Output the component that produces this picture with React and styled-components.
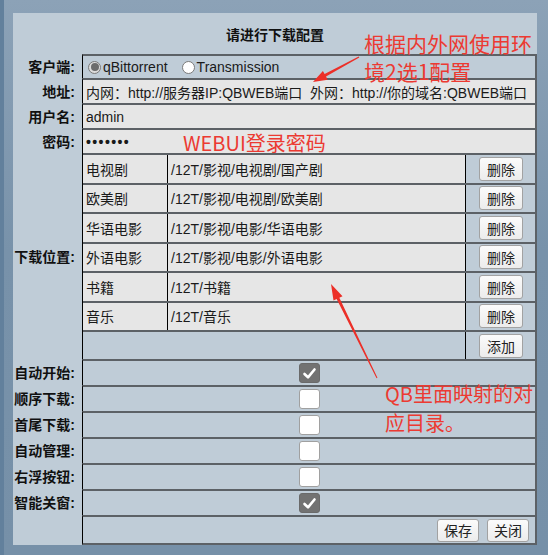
import React from "react";
import styled, { createGlobalStyle } from "styled-components";

const GlobalStyle = createGlobalStyle`
  html, body {
    margin: 0;
    padding: 0;
  }
  body {
    font-family: "Liberation Sans", "Noto Sans CJK SC", sans-serif;
    background: #7690a8;
  }
`;

const LINE = "#5c6166";
const PANEL = "#bfccd7";
const FIELD = "#e6e6e6";

const Frame = styled.div`
  position: relative;
  width: 548px;
  height: 555px;
  box-sizing: border-box;
  padding: 13px 11px 10px 13px;
  background: linear-gradient(180deg, #8ca2b7 0%, #7892aa 45%, #7690a8 100%);
  box-shadow: inset 4px 0 0 #62809c;
`;

const Panel = styled.div`
  width: 524px;
  height: 532px;
  background: ${PANEL};
  display: flex;
  flex-direction: column;
`;

const Title = styled.div`
  height: 41px;
  display: flex;
  align-items: center;
  justify-content: center;
  font-size: 14px;
  font-weight: bold;
  color: #111;
`;

const Form = styled.div`
  display: grid;
  grid-template-columns: 69px 1fr;
`;

const Label = styled.div`
  display: flex;
  align-items: center;
  justify-content: flex-end;
  padding-right: 7px;
  font-size: 14px;
  font-weight: bold;
  color: #111;
  white-space: nowrap;
`;

const Cell = styled.div`
  box-sizing: border-box;
  height: ${(p) => p.$h}px;
  display: flex;
  align-items: center;
  justify-content: ${(p) => p.$justify || "flex-start"};
  padding: ${(p) => p.$pad || "0 0 0 3px"};
  background: ${(p) => (p.$fill ? FIELD : PANEL)};
  border-left: 1px solid #000;
  border-right: 2px solid ${LINE};
  border-top: ${(p) => (p.$noTop ? "none" : `2px solid ${LINE}`)};
  border-bottom: ${(p) => (p.$last ? `2px solid ${LINE}` : "none")};
  font-size: 14px;
  color: #1a1a1a;
  white-space: nowrap;
  overflow: hidden;
  gap: ${(p) => p.$gap || 0}px;
`;

const Password = styled.span`
  font-weight: bold;
  letter-spacing: 1.4px;
`;

const RadioOption = styled.label`
  display: flex;
  align-items: center;
  gap: 2px;
  margin-right: 14px;
  font-size: 14px;
`;

const RadioDot = styled.span`
  box-sizing: border-box;
  width: 13px;
  height: 13px;
  border-radius: 50%;
  border: 1px solid #7a7a7a;
  background: ${(p) => (p.$on ? "#dcdcdc" : "#fff")};
  display: flex;
  align-items: center;
  justify-content: center;

  &::after {
    content: "";
    width: 8px;
    height: 8px;
    border-radius: 50%;
    background: ${(p) => (p.$on ? "#6c6c6c" : "transparent")};
  }
`;

const DirTable = styled.div`
  display: flex;
  flex-direction: column;
  width: 100%;
`;

const DirRow = styled.div`
  box-sizing: border-box;
  height: ${(p) => p.$h}px;
  display: grid;
  grid-template-columns: 85px 1fr 69px;
  border-top: 2px solid ${LINE};
`;

const DirText = styled.div`
  display: flex;
  align-items: center;
  padding-left: 3px;
  background: ${(p) => (p.$blank ? PANEL : FIELD)};
  border-right: 1px solid #000;
  grid-column: ${(p) => (p.$span ? "span 2" : "auto")};
  font-size: 14px;
  color: #1a1a1a;
`;

const DirAction = styled.div`
  display: flex;
  align-items: center;
  justify-content: center;
  padding-left: 1px;
`;

const Button = styled.button`
  box-sizing: border-box;
  width: ${(p) => (p.$small ? 42 : 44)}px;
  height: ${(p) => (p.$small ? 23 : 24)}px;
  padding: 0;
  font-family: "Noto Sans CJK SC", sans-serif;
  font-size: 14px;
  line-height: 1;
  color: #222;
  border: 1px solid #a2a2a2;
  border-radius: 3px;
  background: linear-gradient(180deg, #fbfbfb 0%, #ececec 100%);
`;

const Box = styled.span`
  box-sizing: border-box;
  width: 21px;
  height: 20px;
  border-radius: 3px;
  border: 1px solid ${(p) => (p.$on ? "#6a6a6a" : "#a0a0a0")};
  background: ${(p) => (p.$on ? "#727272" : "#fff")};
  display: flex;
  align-items: center;
  justify-content: center;
`;

const Note = styled.div`
  position: absolute;
  left: ${(p) => p.$x}px;
  top: ${(p) => p.$y}px;
  font-family: "Noto Sans CJK SC", sans-serif;
  font-size: ${(p) => p.$size}px;
  line-height: ${(p) => p.$lh}px;
  color: #ec3a32;
  white-space: nowrap;
`;

const Overlay = styled.svg`
  position: absolute;
  left: 0;
  top: 0;
  pointer-events: none;
`;

const dirs = [
  ["电视剧", "/12T/影视/电视剧/国产剧"],
  ["欧美剧", "/12T/影视/电视剧/欧美剧"],
  ["华语电影", "/12T/影视/电影/华语电影"],
  ["外语电影", "/12T/影视/电影/外语电影"],
  ["书籍", "/12T/书籍"],
  ["音乐", "/12T/音乐"],
];

const toggles = [
  ["自动开始", true],
  ["顺序下载", false],
  ["首尾下载", false],
  ["自动管理", false],
  ["右浮按钮", false],
  ["智能关窗", true],
];

function Check({ on }) {
  return (
    <Box $on={on}>
      {on && (
        <svg width="15" height="15" viewBox="0 0 15 15">
          <path d="M2.5 8 L6 11.3 L12.5 3.5" fill="none" stroke="#fff" strokeWidth="2.6" strokeLinecap="round" strokeLinejoin="round" />
        </svg>
      )}
    </Box>
  );
}

export default function App() {
  return (
    <>
      <GlobalStyle />
      <Frame>
        <Panel>
          <Title>请进行下载配置</Title>
          <Form>
            <Label>客户端:</Label>
            <Cell $h={24} $pad="0 0 0 5px">
              <RadioOption>
                <RadioDot $on />
                qBittorrent
              </RadioOption>
              <RadioOption>
                <RadioDot />
                Transmission
              </RadioOption>
            </Cell>

            <Label>地址:</Label>
            <Cell $h={25} $fill>
              内网：http://服务器IP:QBWEB端口{"\u00a0\u00a0"}外网：http://你的域名:QBWEB端口
            </Cell>

            <Label>用户名:</Label>
            <Cell $h={25} $fill>admin</Cell>

            <Label>密码:</Label>
            <Cell $h={25} $fill>
              <Password>•••••••</Password>
            </Cell>

            <Label>下载位置:</Label>
            <Cell $h={206} $noTop $pad="0">
              <DirTable>
                {dirs.map(([name, path]) => (
                  <DirRow key={name} $h={29.5}>
                    <DirText>{name}</DirText>
                    <DirText>{path}</DirText>
                    <DirAction>
                      <Button>删除</Button>
                    </DirAction>
                  </DirRow>
                ))}
                <DirRow $h={29}>
                  <DirText $blank $span />
                  <DirAction>
                    <Button>添加</Button>
                  </DirAction>
                </DirRow>
              </DirTable>
            </Cell>

            {toggles.map(([name, on]) => (
              <React.Fragment key={name}>
                <Label>{name}:</Label>
                <Cell $h={26} $justify="center" $pad="0">
                  <Check on={on} />
                </Cell>
              </React.Fragment>
            ))}

            <div />
            <Cell $h={30} $last $justify="flex-end" $pad="0 6px 0 0" $gap={8}>
              <Button $small>保存</Button>
              <Button $small>关闭</Button>
            </Cell>
          </Form>
        </Panel>

        <Note $x={364} $y={29} $size={21} $lh={28}>
          根据内外网使用环
          <br />
          境2选1配置
        </Note>
        <Note $x={183} $y={131} $size={20} $lh={24}>
          WEBUI登录密码
        </Note>
        <Note $x={385} $y={379} $size={20} $lh={29}>
          QB里面映射的对
          <br />
          应目录。
        </Note>

        <Overlay width="548" height="555" viewBox="0 0 548 555">
          <polygon
            fill="#ec2f28"
            points="313,82 322.9,70.9 324.6,74 358.7,56.5 359.3,57.5 326,76.6 327.7,79.7"
          />
          <polygon
            fill="#ec2f28"
            points="331,284 342.5,296.2 339.35,297.74 377.45,377.78 376.55,378.22 336.65,299.06 333.5,300.6"
          />
        </Overlay>
      </Frame>
    </>
  );
}
